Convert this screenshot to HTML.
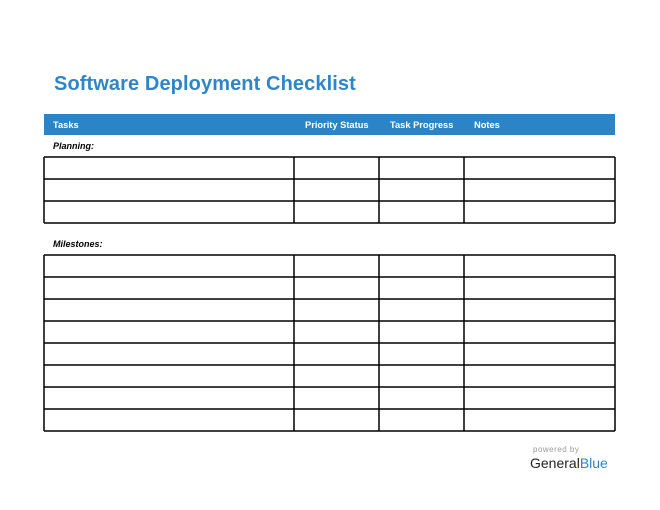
<!DOCTYPE html>
<html><head><style>
body{margin:0;width:660px;height:510px;background:#fff;position:relative;font-family:"Liberation Sans",sans-serif;overflow:hidden}
.a{position:absolute}
</style></head><body>
<div class="a" style="left:54px;top:73px;font-size:20px;font-weight:bold;color:#2e86c9;letter-spacing:0.1px">Software Deployment Checklist</div>
<div class="a" style="left:44px;top:114px;width:571px;height:21px;background:#2a84c6"></div>
<div class="a" style="left:53px;top:119.5px;font-size:9.3px;font-weight:bold;color:#fff">Tasks</div>
<div class="a" style="left:305px;top:119.5px;font-size:9.3px;font-weight:bold;color:#fff">Priority Status</div>
<div class="a" style="left:390px;top:119.5px;font-size:9.3px;font-weight:bold;color:#fff">Task Progress</div>
<div class="a" style="left:474px;top:119.5px;font-size:9.3px;font-weight:bold;color:#fff">Notes</div>
<div class="a" style="left:53px;top:141px;font-size:9px;font-weight:bold;font-style:italic">Planning:</div>
<div class="a" style="left:53px;top:239px;font-size:9px;font-weight:bold;font-style:italic">Milestones:</div>
<svg class="a" style="left:0;top:0" width="660" height="510">
<g stroke="#000" stroke-width="1.5" fill="none">
<path d="M44 157H615M44 179H615M44 201H615M44 223H615M44 157V223M294 157V223M379 157V223M464 157V223M615 157V223"/>
<path d="M44 255H615M44 277H615M44 299H615M44 321H615M44 343H615M44 365H615M44 387H615M44 409H615M44 431H615M44 255V431M294 255V431M379 255V431M464 255V431M615 255V431"/>
</g></svg>
<div class="a" style="left:533px;top:445px;font-size:8px;color:#999;letter-spacing:0.5px">powered by</div>
<div class="a" style="left:530px;top:455px;font-size:14px;color:#222">General<span style="color:#2a84c6">Blue</span></div>
</body></html>
